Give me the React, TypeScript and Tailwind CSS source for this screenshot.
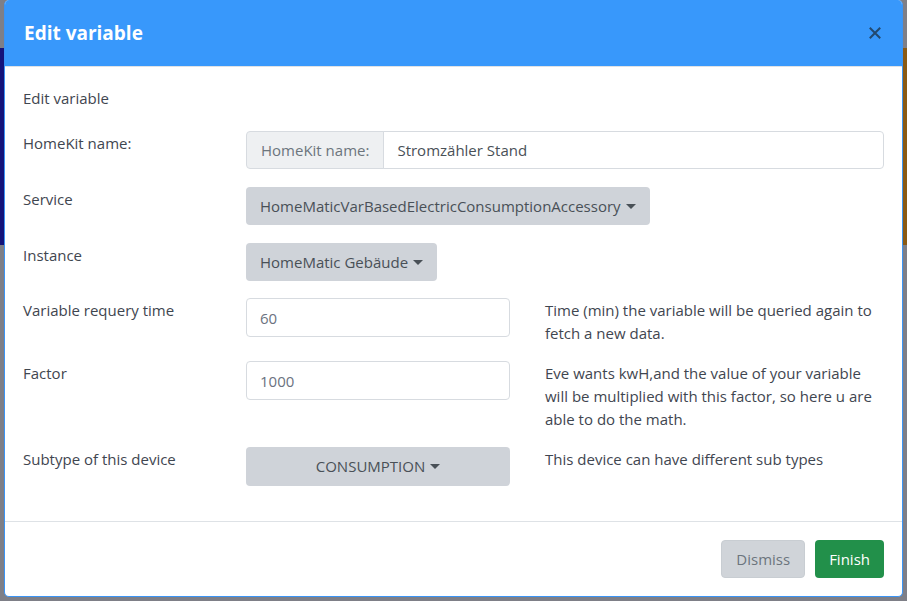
import React from 'react';

const font = { fontFamily: '"Open Sans", "Noto Sans", sans-serif' };

function Caret() {
  return (
    <span className="inline-block ml-[5px] align-[3px] w-0 h-0 border-t-[5px] border-t-current border-x-[5px] border-x-transparent" />
  );
}

function Row({ label, children, help, className = 'min-h-[40px]' }: { label: string; children: React.ReactNode; help?: React.ReactNode; className?: string }) {
  return (
    <div className={`grid grid-cols-[223px_264px_1fr] ${className}`}>
      <div className="leading-[24px]">{label}</div>
      {children}
      {help !== undefined && <div className="pl-[35px] leading-[23px] pt-[1px]">{help}</div>}
    </div>
  );
}

export default function App() {
  return (
    <div className="w-[907px] h-[601px] overflow-hidden bg-[#7e7f87] flex" style={font}>
      {/* left edge of page behind the backdrop */}
      <div className="w-[4px] flex flex-col shrink-0">
        <div className="h-[48px]" />
        <div className="h-[197px] bg-[#14137a]" />
      </div>

      <div className="w-[899px] h-[597px] bg-white rounded-[5px] border border-[#3a94f5] border-t-0 flex flex-col overflow-hidden text-[15px] text-[#3f4650]">
        <div className="h-[67px] bg-[#3898fb] border-b border-[#dee2e6] flex items-center justify-between pl-[19px] pr-[21px] shrink-0">
          <h5 className="text-[19px] font-bold text-white leading-[24px]">Edit variable</h5>
          <button className="w-[12px] h-[12px] text-[#22496f]">
            <svg viewBox="0 0 12 12" className="w-[12px] h-[12px]" fill="none" stroke="currentColor" strokeWidth="2" strokeLinecap="square">
              <path d="M1.5 1.5 L10.5 10.5 M10.5 1.5 L1.5 10.5" />
            </svg>
          </button>
        </div>

        <div className="pl-[18px] pr-[18px] pt-[19px] flex-1">
          <p className="leading-[24px] mb-[21px]">Edit variable</p>
          <div className="flex flex-col gap-4">
            <div className="grid grid-cols-[223px_1fr] min-h-[40px]">
              <div className="leading-[24px]">HomeKit name:</div>
              <div className="flex h-[38px]">
                <span className="px-[14px] flex items-center bg-[#eef0f2] border border-[#d7dbe0] rounded-l-[4px] text-[#6c757d]">HomeKit name:</span>
                <input
                  className="flex-1 -ml-px px-[13px] border border-[#d7dbe0] rounded-r-[4px] text-[#495057] outline-none"
                  defaultValue="Stromzähler Stand"
                />
              </div>
            </div>

            <Row label="Service">
              <div className="col-span-2">
                <button className="h-[38px] px-[14px] rounded-[4px] bg-[#cfd3d9] text-[#495057]">
                  HomeMaticVarBasedElectricConsumptionAccessory<Caret />
                </button>
              </div>
            </Row>

            <Row label="Instance" className="min-h-[39px]">
              <div className="col-span-2">
                <button className="h-[38px] px-[14px] rounded-[4px] bg-[#cfd3d9] text-[#495057]">
                  HomeMatic Gebäude<Caret />
                </button>
              </div>
            </Row>

            <Row
              label="Variable requery time"
              help={<>Time (min) the variable will be queried again to fetch a new data.</>}
            >
              <input className="h-[39px] px-[13px] border border-[#d7dbe0] rounded-[4px] text-[#6b7280] outline-none" defaultValue="60" />
            </Row>

            <Row
              label="Factor"
              help={<>Eve wants kwH,and the value of your variable will be multiplied with this factor, so here u are able to do the math.</>}
            >
              <input className="h-[39px] px-[13px] border border-[#d7dbe0] rounded-[4px] text-[#6b7280] outline-none" defaultValue="1000" />
            </Row>

            <Row label="Subtype of this device" help={<>This device can have different sub types</>}>
              <button className="h-[39px] rounded-[4px] bg-[#cfd3d9] text-[#495057]">
                CONSUMPTION<Caret />
              </button>
            </Row>
          </div>
        </div>

        <div className="h-[75px] border-t border-[#dee2e6] flex items-center justify-end gap-[10px] pr-[18px] shrink-0">
          <button className="h-[38px] px-[14px] rounded-[4px] bg-[#d0d4d9] border border-[#c8cdd2] text-[#6c757d]">Dismiss</button>
          <button className="h-[38px] px-[14px] rounded-[4px] bg-[#22904a] text-white">Finish</button>
        </div>
      </div>

      <div className="w-[4px] flex flex-col shrink-0">
        <div className="h-[48px]" />
        <div className="h-[197px] bg-[#8a5a14]" />
      </div>
    </div>
  );
}
